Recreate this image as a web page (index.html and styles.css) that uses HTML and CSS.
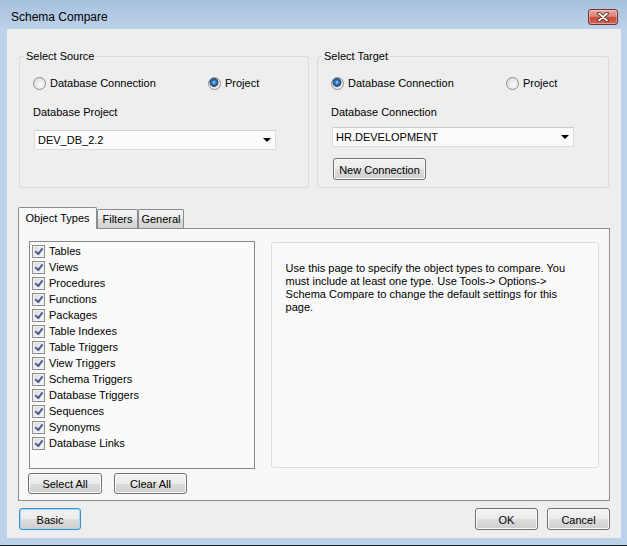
FILE: index.html
```html
<!DOCTYPE html>
<html lang="en">
<head>
  <meta charset="UTF-8" />
  <title>Schema Compare</title>
  <link rel="stylesheet" href="styles.css">
</head>
<body>
  <div class="window">
    <div class="titlebar">
      <span class="title">Schema Compare</span>
      <button class="close-btn" type="button" aria-label="Close">
        <svg width="12" height="10" viewBox="0 0 12 10">
          <path d="M2 1.5 L10 8.5 M10 1.5 L2 8.5" stroke="#4a2320" stroke-width="3.6" stroke-linecap="round" fill="none" />
          <path d="M2 1.5 L10 8.5 M10 1.5 L2 8.5" stroke="#ffffff" stroke-width="1.8" stroke-linecap="round" fill="none" />
        </svg>
      </button>
    </div>

    <div class="client">
      <div class="groups">
        <fieldset class="group group-source">
          <legend>Select Source</legend>
          <div class="group-body">
            <div class="radios">
              <label class="radio"><span class="radio-dot"></span>Database Connection</label>
              <label class="radio"><span class="radio-dot checked"></span>Project</label>
            </div>
            <div class="field-label">Database Project</div>
            <div class="combo combo-source"><span>DEV_DB_2.2</span><span class="combo-arrow"></span></div>
          </div>
        </fieldset>

        <fieldset class="group group-target">
          <legend>Select Target</legend>
          <div class="group-body">
            <div class="radios">
              <label class="radio"><span class="radio-dot checked"></span>Database Connection</label>
              <label class="radio"><span class="radio-dot"></span>Project</label>
            </div>
            <div class="field-label">Database Connection</div>
            <div class="combo combo-target"><span>HR.DEVELOPMENT</span><span class="combo-arrow"></span></div>
            <button class="btn btn-new" type="button">New Connection</button>
          </div>
        </fieldset>
      </div>

      <div class="tabs">
        <div class="tab active tab-types">Object Types</div>
        <div class="tab tab-filters">Filters</div>
        <div class="tab tab-general">General</div>
      </div>

      <div class="tab-page">
        <div class="types-col">
          <div class="type-list">
            <label class="check-item"><span class="check"></span>Tables</label>
            <label class="check-item"><span class="check"></span>Views</label>
            <label class="check-item"><span class="check"></span>Procedures</label>
            <label class="check-item"><span class="check"></span>Functions</label>
            <label class="check-item"><span class="check"></span>Packages</label>
            <label class="check-item"><span class="check"></span>Table Indexes</label>
            <label class="check-item"><span class="check"></span>Table Triggers</label>
            <label class="check-item"><span class="check"></span>View Triggers</label>
            <label class="check-item"><span class="check"></span>Schema Triggers</label>
            <label class="check-item"><span class="check"></span>Database Triggers</label>
            <label class="check-item"><span class="check"></span>Sequences</label>
            <label class="check-item"><span class="check"></span>Synonyms</label>
            <label class="check-item"><span class="check"></span>Database Links</label>
          </div>
          <div class="list-buttons">
            <button class="btn btn-select" type="button">Select All</button>
            <button class="btn btn-clear" type="button">Clear All</button>
          </div>
        </div>

        <div class="help-box">
          Use this page to specify the object types to compare. You must include at least one type. Use Tools-&gt; Options-&gt; Schema Compare to change the default settings for this page.
        </div>
      </div>

      <div class="actions">
        <button class="btn btn-basic" type="button">Basic</button>
        <div class="actions-right">
          <button class="btn btn-wide" type="button">OK</button>
          <button class="btn btn-wide" type="button">Cancel</button>
        </div>
      </div>
    </div>
  </div>
</body>
</html>
```

FILE: styles.css
```css
* {
  box-sizing: border-box;
  margin: 0;
  padding: 0;
}

body {
  font-family: "Liberation Sans", Arial, sans-serif;
  font-size: 11px;
  color: #000;
  background-color: #bcd2ea;
}

/* window frame */
.window {
  width: 627px;
  height: 546px;
  background-color: #bcd2ea;
  border-bottom: 1px solid #1f1f1f;
}

.titlebar {
  height: 29px;
  display: flex;
  align-items: center;
  justify-content: space-between;
  padding: 5px 9px 0 11px;
  background: linear-gradient(#a7c0de, #bcd2ea);
}

.title {
  font-size: 12px;
}

.close-btn {
  width: 30px;
  height: 16px;
  display: flex;
  align-items: center;
  justify-content: center;
  border: 1px solid #7c2f29;
  border-radius: 3px;
  background: linear-gradient(#e8aca2, #d98174 45%, #c8473a 55%, #d0695b);
  box-shadow: inset 0 0 0 1px rgba(255, 255, 255, 0.35);
}

.client {
  height: 509px;
  margin: 0 6px 0 7px;
  padding: 21px 11px 0;
  background-color: #eeeeee;
  display: flex;
  flex-direction: column;
}

/* source / target group boxes */
.groups {
  display: flex;
  gap: 8px;
  margin: 0 1px;
}

.group {
  border: 1px solid #d5dbe0;
  border-radius: 3px;
  padding: 12px 4px 7px;
}

.group-source {
  width: 290px;
}

.group-target {
  width: 292px;
}

.group legend {
  padding: 0 2px;
  line-height: 13px;
}

.group-body {
  padding-left: 9px;
}

.radios {
  display: grid;
  grid-template-columns: 175px auto;
  height: 16px;
  align-items: center;
}

.radio {
  display: flex;
  align-items: center;
  gap: 4px;
  line-height: 16px;
}

.radio-dot {
  width: 13px;
  height: 13px;
  border-radius: 50%;
  border: 1px solid #8d8f92;
  background: radial-gradient(circle at 60% 65%, #fbfbfb, #d6d6d6);
}

.radio-dot.checked {
  background: radial-gradient(circle at 45% 40%, #b9e4fb 0, #3d8ccc 1.5px, #1e5a92 3.5px, #3a4a5a 4.2px, #e8e8e8 4.8px, #f6f6f6);
}

.field-label {
  margin-top: 13px;
  line-height: 16px;
}

.combo {
  width: 242px;
  height: 20px;
  margin-left: 1px;
  padding: 0 4px 0 3px;
  display: flex;
  align-items: center;
  justify-content: space-between;
  background-color: #fbfbfb;
  border: 1px solid #dcdcdc;
  border-top-color: #cdcdcd;
}

.combo-source {
  margin-top: 10px;
}

.combo-target {
  margin-top: 7px;
}

.combo-arrow {
  width: 0;
  height: 0;
  border-left: 4px solid transparent;
  border-right: 4px solid transparent;
  border-top: 4px solid #000;
}

/* push buttons */
.btn {
  font: inherit;
  color: #000;
  height: 22px;
  padding-top: 1px;
  border: 1px solid #707070;
  border-radius: 3px;
  background: linear-gradient(#f2f2f2, #ebebeb 50%, #dddddd 51%, #cfcfcf);
  box-shadow: inset 0 0 0 1px #fbfbfb;
}

.btn-new {
  width: 93px;
  margin: 11px 0 0 2px;
}

/* tabs */
.tabs {
  display: flex;
  align-items: flex-end;
  height: 21px;
  margin-top: 19px;
}

.tab {
  height: 19px;
  padding-top: 1px;
  line-height: 16px;
  text-align: center;
  border: 1px solid #898c95;
  border-bottom: none;
  border-radius: 2px 2px 0 0;
  background: linear-gradient(#f2f2f2, #ebebeb 50%, #dddddd 51%, #d2d2d2);
}

.tab.active {
  height: 22px;
  margin-bottom: -1px;
  padding-top: 2px;
  background: #f8f8f8;
  position: relative;
  z-index: 1;
}

.tab-types {
  width: 79px;
}

.tab-filters {
  width: 41px;
}

.tab-general {
  width: 46px;
}

.tab-page {
  height: 273px;
  border: 1px solid #898c95;
  background-color: #f8f8f8;
  padding: 12px 10px 0;
  display: flex;
  gap: 16px;
}

.types-col {
  width: 226px;
}

.type-list {
  height: 228px;
  border: 1px solid #828790;
  background-color: #fafafa;
  padding: 1px 2px 0;
}

.check-item {
  display: flex;
  align-items: center;
  gap: 4px;
  height: 16px;
}

.check {
  width: 13px;
  height: 13px;
  border: 1px solid #8e8f8f;
  background: linear-gradient(135deg, #d9d9d9, #f7f7f7);
  box-shadow: inset 0 0 0 1px #f2f2f2;
  display: flex;
  justify-content: center;
}

.check::after {
  content: "";
  width: 6px;
  height: 3px;
  margin-top: 2px;
  border-left: 2px solid #4d5f9c;
  border-bottom: 2px solid #4d5f9c;
  transform: rotate(-52deg);
}

.list-buttons {
  display: flex;
  gap: 12px;
  margin: 4px 0 0 -1px;
}

.btn-select {
  width: 74px;
  height: 21px;
}

.btn-clear {
  width: 73px;
  height: 21px;
}

.help-box {
  width: 329px;
  height: 226px;
  margin-top: 1px;
  padding: 19px 14px 0;
  line-height: 13px;
  background-color: #f9f9f9;
  border: 1px solid #d9dde1;
  border-radius: 3px;
}

/* dialog buttons */
.actions {
  display: flex;
  justify-content: space-between;
  margin-top: 7px;
  padding-left: 1px;
}

.actions-right {
  display: flex;
  gap: 9px;
}

.btn-basic {
  width: 62px;
  border-color: #3c8dc8;
  box-shadow: inset 0 0 0 1px #9fdcf8;
}

.btn-wide {
  width: 63px;
}
```
